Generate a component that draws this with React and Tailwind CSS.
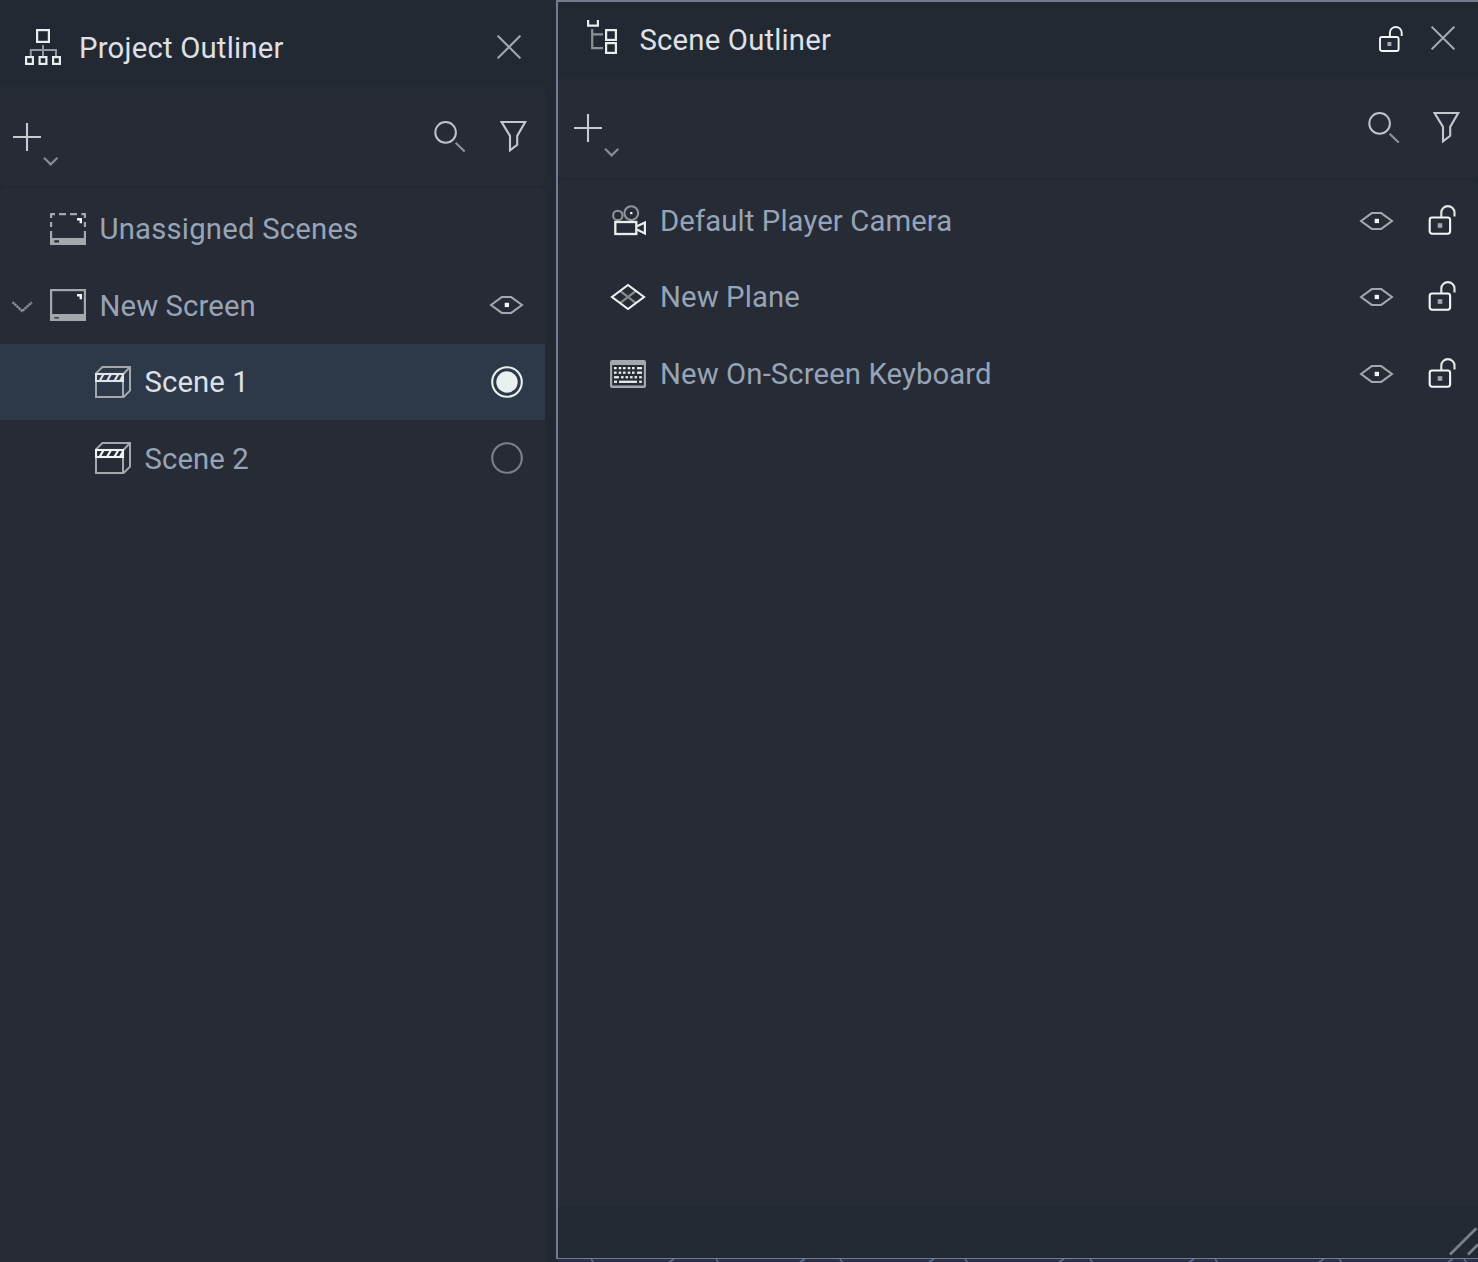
import React from "react";

const LIGHT = "#e8eeee";
const GRAY = "#a3a8ac";

function Icon({ w, h, className = "", children }) {
  return (
    <svg width={w} height={h} viewBox={`0 0 ${w} ${h}`} fill="none" className={`shrink-0 ${className}`}>
      {children}
    </svg>
  );
}

const HierarchyIcon = ({ className }) => (
  <Icon w={36} h={36} className={className}>
    <path d="M18 16V27M5.8 27V21H31V27" stroke="#92979b" strokeWidth="2" />
    <g stroke={LIGHT} strokeWidth="2.2">
      <rect x="12.1" y="1.1" width="11.8" height="11.8" />
      <rect x="1.1" y="28.1" width="6.8" height="6.8" />
      <rect x="14.6" y="28.1" width="6.8" height="6.8" />
      <rect x="28.1" y="28.1" width="6.8" height="6.8" />
    </g>
  </Icon>
);

const TreeIcon = ({ className }) => (
  <Icon w={30} h={34} className={className}>
    <path d="M5.2 9V28.2H16M5.2 14.4H16" stroke="#8c9196" strokeWidth="2.2" />
    <path d="M1.1 0V5.7H10.9V0" stroke={LIGHT} strokeWidth="2.2" />
    <rect x="19.1" y="10.1" width="9.8" height="9.8" stroke={LIGHT} strokeWidth="2.2" />
    <rect x="19.1" y="23.1" width="9.8" height="9.8" stroke={LIGHT} strokeWidth="2.2" />
  </Icon>
);

const CloseIcon = ({ className }) => (
  <Icon w={24} h={24} className={className}>
    <path d="M.6 .6L23.4 23.4M23.4 .6L.6 23.4" stroke={GRAY} strokeWidth="2" />
  </Icon>
);

const AddIcon = ({ className }) => (
  <Icon w={46} h={44} className={className}>
    <path d="M14 0V28M0 14H28" stroke="#c6cbd0" strokeWidth="2.1" />
    <path d="M31 34.8L37.7 41.4L44.4 34.8" stroke="#868b94" strokeWidth="2.2" />
  </Icon>
);

const SearchIcon = ({ className }) => (
  <Icon w={32} h={31} className={className}>
    <circle cx="11.6" cy="11.4" r="10.3" stroke="#bfc4c8" strokeWidth="2" />
    <path d="M21.6 21.7L30.7 30.6" stroke="#8d9299" strokeWidth="2.1" />
  </Icon>
);

const FilterIcon = ({ className }) => (
  <Icon w={28} h={33} className={className}>
    <path d="M1.6 2H25.2L17.2 15.9V24.8L10 30.4V15.9Z" stroke="#c3c8cc" strokeWidth="2.1" />
  </Icon>
);

const LockIcon = ({ className }) => (
  <Icon w={28} h={30} className={className}>
    <rect x="1.7" y="12.5" width="20.4" height="16.2" rx="2.4" stroke="#f3f7f6" strokeWidth="2.1" />
    <path d="M13.3 12V7.4A6.6 6.3 0 0 1 26.5 7.4V11.6" stroke="#e4e9e8" strokeWidth="2.1" />
    <rect x="9.7" y="18.2" width="4.6" height="4.6" fill={GRAY} />
  </Icon>
);

const SmallLockIcon = ({ className }) => (
  <Icon w={25} h={28} className={className}>
    <rect x="1" y="13" width="18.6" height="14" rx="2" stroke="#f3f7f6" strokeWidth="1.9" />
    <path d="M10.9 12.6V8.7A5.9 5.7 0 0 1 22.7 8.7V12" stroke="#f0f4f3" strokeWidth="1.9" />
    <rect x="8.4" y="18" width="4" height="4" fill={GRAY} />
  </Icon>
);

const ScreenIcon = ({ dashed, className }) => (
  <Icon w={36} h={32} className={className}>
    {dashed ? (
      <path
        d="M0 1.1H5M9 1.1H16M20 1.1H27M31.4 1.1H36M1.1 0V5M1.1 9V14M1.1 18V26M34.9 0V5M34.9 9V14M34.9 18V26"
        stroke={GRAY}
        strokeWidth="2.2"
      />
    ) : (
      <rect x="1.1" y="1.1" width="33.8" height="26" stroke={GRAY} strokeWidth="2.2" />
    )}
    <path d="M0 25H36V32H0ZM4.3 27.2V29.6H9V27.2Z" fill={GRAY} fillRule="evenodd" />
    <path d="M27 5H32V10.3H29.6V7.5H27Z" fill="#f2f5f5" />
  </Icon>
);

const ExpandIcon = ({ className }) => (
  <Icon w={21} h={13} className={className}>
    <path d="M.8 1.4L10.2 10.2L19.8 1.4" stroke="#5d626c" strokeWidth="2.4" />
    <path d="M.8 1.4L10.2 10.2L19.8 1.4" stroke="#9a9fa5" strokeWidth="2.2" strokeDasharray="1.4 1.4" />
  </Icon>
);

const ClapperIcon = ({ className, color = "#f0f4f4" }) => (
  <Icon w={36} h={32} className={className}>
    <path d="M1 8V31H28.6L35 24.6V1H7.4L1 7.4M28.4 8L35 1M28 31V8" stroke={GRAY} strokeWidth="2" />
    <rect x="1" y="8" width="27" height="7" stroke={color} strokeWidth="2.1" />
    <path d="M4.6 15L8.6 8M12 15L16 8M19.4 15L23.4 8M25 15L28 9.6" stroke={color} strokeWidth="2.2" />
  </Icon>
);

const EyeIcon = ({ className }) => (
  <Icon w={36} h={18} className={className}>
    <path d="M2 9L12.8 1.1H22.2L33 9L22.2 16.9H12.8Z" stroke={GRAY} strokeWidth="2" />
    <rect x="15.7" y="6.8" width="4.3" height="4.3" fill="#f2f5f5" />
  </Icon>
);

const RadioIcon = ({ on, className }) => (
  <Icon w={32} h={32} className={className}>
    <circle cx="16" cy="16" r="14.8" stroke={on ? "#e8f1ef" : "#7c8189"} strokeWidth="2.1" />
    {on && <circle cx="16" cy="16" r="10.7" fill="#e8f1ef" />}
  </Icon>
);

const CameraIcon = ({ className }) => (
  <Icon w={36} h={31} className={className}>
    <circle cx="7.8" cy="10.4" r="4.7" stroke="#8f9499" strokeWidth="2.1" />
    <circle cx="21.3" cy="8.2" r="6.9" stroke="#8f9499" strokeWidth="2.1" />
    <rect x="20.2" y="7" width="2.2" height="2.2" fill="#f2f5f5" />
    <rect x="5.3" y="17" width="21" height="12" stroke={LIGHT} strokeWidth="2.3" />
    <path d="M27 21.3L34.9 17.4V28.4L27 24.6" stroke={LIGHT} strokeWidth="2.2" />
  </Icon>
);

const PlaneIcon = ({ className }) => (
  <Icon w={36} h={28} className={className}>
    <path d="M9.8 7.6L26.2 20.4M26.2 7.6L9.8 20.4" stroke="#858a8f" strokeWidth="2.4" />
    <path d="M18 2L34 14L18 26L2 14Z" stroke="#f0f4f4" strokeWidth="2.1" />
  </Icon>
);

const KEY_ROWS = [
  [[4, 2.6], [8.7, 2.6], [13, 2.6], [17.7, 2.6], [22, 2.6], [27, 5]],
  [[4, 2.6], [8.7, 2.6], [13, 2.6], [17.7, 2.6], [22, 2.6], [27, 5]],
  [[4, 5], [11, 2.6], [15.5, 2.6], [20, 2.6], [24.5, 2.6], [29.2, 2.6]],
  [[4, 3], [9, 18], [29.2, 2.6]],
];

const KeyboardIcon = ({ className }) => (
  <Icon w={36} h={28} className={className}>
    <path
      d="M2 0H34Q36 0 36 2V26Q36 28 34 28H2Q0 28 0 26V2Q0 0 2 0ZM2.2 5V25.6H33.8V5Z"
      fill={GRAY}
      fillRule="evenodd"
    />
    {KEY_ROWS.map((row, r) =>
      row.map(([x, w]) => (
        <rect key={`${r}-${x}`} x={x} y={7 + r * 4.55} width={w} height="2.3" fill="#e6ebeb" />
      ))
    )}
  </Icon>
);

function ProjectOutliner() {
  return (
    <section className="flex w-[545px] shrink-0 flex-col">
      <header className="flex h-[85px] items-start pl-[25px] pr-[24px]">
        <HierarchyIcon className="mt-[29px]" />
        <h2 className="ml-[18px] mt-[28px] text-[29.3px] leading-[40px] tracking-[0.2px] text-[#dfe0e7]">Project Outliner</h2>
        <CloseIcon className="ml-auto mt-[35px]" />
      </header>
      <div className="flex h-[101px] items-start rounded-md bg-[#262b36] pl-[13px] pr-[17px]">
        <AddIcon className="mt-[38px]" />
        <SearchIcon className="ml-auto mt-[36px]" />
        <FilterIcon className="ml-[34px] mt-[35px]" />
      </div>
      <div className="flex-1 rounded-t-md border-t-2 border-[#232832] bg-[#262b36] pt-[3px] text-[29.3px] leading-[40px] tracking-[0.2px] text-[#97a4b7]">
        <div className="flex h-[77px] items-start pl-[50px]">
          <ScreenIcon dashed className="mt-[22px]" />
          <span className="ml-[13.5px] mt-[18px]">Unassigned Scenes</span>
        </div>
        <div className="flex h-[76px] items-start pl-[12px] pr-[20px]">
          <ExpandIcon className="mt-[33px]" />
          <ScreenIcon className="ml-[17px] mt-[21px]" />
          <span className="ml-[13.5px] mt-[18px] tracking-[0.1px]">New Screen</span>
          <EyeIcon className="ml-auto mt-[28px]" />
        </div>
        <div className="flex h-[76px] items-start bg-[#2d3848] pl-[95px] pr-[22px] text-[#dfe0e7]">
          <ClapperIcon className="mt-[22px]" color="#dfe4e8" />
          <span className="ml-[13.5px] mt-[18px] tracking-[0.1px]">Scene 1</span>
          <RadioIcon on className="ml-auto mt-[22px]" />
        </div>
        <div className="flex h-[77px] items-start pl-[95px] pr-[22px]">
          <ClapperIcon className="mt-[22px]" />
          <span className="ml-[13.5px] mt-[19px] tracking-[0.1px]">Scene 2</span>
          <RadioIcon className="ml-auto mt-[22px]" />
        </div>
      </div>
    </section>
  );
}

const NODES = [
  { name: "Default Player Camera", icon: <CameraIcon className="mt-[22px]" /> },
  { name: "New Plane", icon: <PlaneIcon className="mt-[24px]" /> },
  { name: "New On-Screen Keyboard", icon: <KeyboardIcon className="mt-[24px]" /> },
];
const ROW_HEIGHTS = ["h-[76px]", "h-[77px]", "h-[76px]"];

function SceneOutliner() {
  return (
    <section className="flex h-[1259px] flex-col border-b border-l-2 border-t-2 border-[#747d90] bg-[#232932]">
      <header className="flex h-[75px] items-start pl-[29px] pr-[23px]">
        <TreeIcon className="mt-[18px]" />
        <h2 className="ml-[22.5px] mt-[18px] text-[29.3px] leading-[40px] tracking-[0.18px] text-[#dfe0e7]">Scene Outliner</h2>
        <SmallLockIcon className="ml-auto mt-[22px]" />
        <CloseIcon className="ml-[27px] mt-[24px]" />
      </header>
      <div className="flex h-[101px] items-start rounded-md bg-[#262b36] pl-[16px] pr-[17px]">
        <AddIcon className="mt-[37px]" />
        <SearchIcon className="ml-auto mt-[35px]" />
        <FilterIcon className="ml-[33px] mt-[34px]" />
      </div>
      <div className="flex-1 rounded-t-md border-t-2 border-[#232832] bg-[#262b36] pt-[3px] text-[29.3px] leading-[40px] tracking-[0.1px] text-[#97a4b7]">
        {NODES.map((node, i) => (
          <div key={node.name} className={`flex items-start pl-[52px] pr-[22px] ${ROW_HEIGHTS[i]}`}>
            {node.icon}
            <span className="ml-[14px] mt-[18px]">{node.name}</span>
            <EyeIcon className="ml-auto mt-[29px]" />
            <LockIcon className="ml-[33px] mt-[22px]" />
          </div>
        ))}
      </div>
      <footer className="flex h-[52px] items-end justify-end">
        <Icon w={30} h={32} className="mb-[1px]">
          <path d="M2 29.6L28.4 3.2M20 29.6L30 19.6" stroke="#7b7f88" strokeWidth="2.8" />
        </Icon>
      </footer>
    </section>
  );
}

const ARCS = [
  [33, 1], [111, -1], [158, 1], [242, -1], [282, 1], [371, -1], [407, 1], [501, -1],
  [532, 1], [631, -1], [657, 1], [761, -1], [781, 1], [890, -1], [906, 1],
];

function GridStrip() {
  return (
    <Icon w={920} h={3} className="ml-[2px] bg-[#283145]">
      {ARCS.map(([x, dir]) => (
        <path key={x} d={dir > 0 ? `M${x} 0L${x + 2.5} 3` : `M${x + 5} 0L${x} 3`} stroke="#5b7192" strokeWidth="1.5" />
      ))}
    </Icon>
  );
}

export default function App() {
  return (
    <main className="flex h-[1262px] w-[1478px] overflow-hidden bg-[#232932] font-['Roboto',sans-serif] whitespace-nowrap">
      <ProjectOutliner />
      <div className="ml-[11px] flex min-w-0 flex-1 flex-col">
        <SceneOutliner />
        <GridStrip />
      </div>
    </main>
  );
}
